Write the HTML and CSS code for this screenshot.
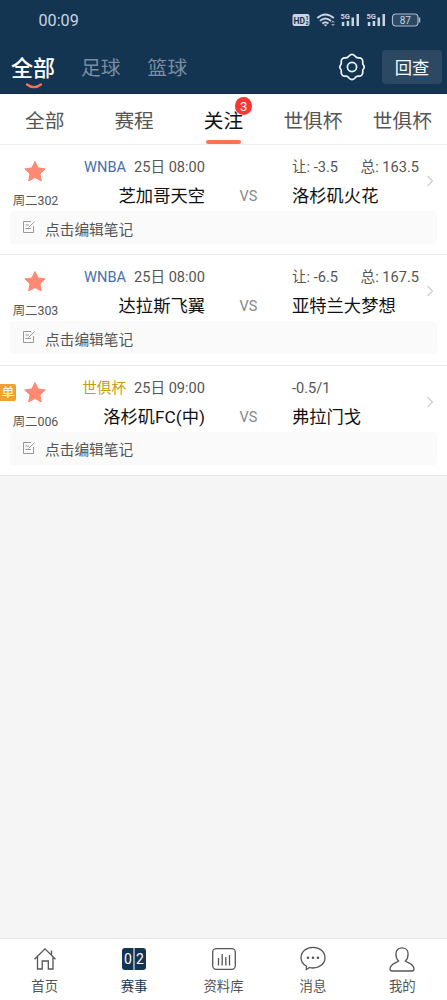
FILE: index.html
```html
<!DOCTYPE html>
<html lang="zh-CN">
<head>
<meta charset="utf-8">
<meta name="viewport" content="width=device-width, initial-scale=1">
<title>赛事</title>
<link rel="stylesheet" href="styles.css">
</head>
<body>
<div class="app">
  <header class="header">
    <div class="status">
      <span class="clock">00:09</span>
      <svg class="status-icons" width="130" height="16" viewBox="0 0 130 16">
        <rect x="0.500" y="2" width="17" height="12" rx="2" fill="#c9d4e0"/>
        <text x="1.500" y="11.500" class="hd">HD</text>
        <text x="13.400" y="7.600" class="hd-sub">1</text>
        <text x="13.400" y="13" class="hd-sub">2</text>
        <g fill="none" stroke="#c9d4e0" stroke-width="1.900">
          <path d="M25.300 6Q33.400 -1.200 41.800 6"/>
          <path d="M27.900 8.900Q33.400 4.200 39 8.900"/>
          <path d="M30.300 11.600Q33.400 9 36.500 11.600"/>
        </g>
        <path d="M31.500 12.400h4l-2 2z" fill="#c9d4e0"/>
        <path d="M39 10.500l2-2 2 2zM39 12l2 2 2-2z" fill="#8fa1b5"/>
        <g id="signal">
          <text x="48.500" y="7.300" class="net">5G</text>
          <path d="M49.800 10h2.500v4h-2.500zM54.700 9h2.500v5h-2.500zM59.500 5.500H62V14h-2.500zM64.500 2H67v12h-2.500z" fill="#c9d4e0"/>
        </g>
        <use href="#signal" x="26"/>
        <rect x="100.500" y="2" width="25.500" height="12" rx="3.500" fill="#2c4863" stroke="#a9b7c6" stroke-width="1.200"/>
        <path d="M127.500 5.500v5" stroke="#a9b7c6" stroke-width="1.500"/>
        <text x="113.300" y="11.500" class="power">87</text>
      </svg>
    </div>
    <div class="topbar">
      <nav class="sports">
        <span class="sport current">全部<svg class="smile" width="18" height="7" viewBox="0 0 18 7"><path d="M2 1.500Q9 6.800 16 1.500" fill="none" stroke="#fb6f55" stroke-width="2.300" stroke-linecap="round"/></svg></span>
        <span class="sport">足球</span>
        <span class="sport">篮球</span>
      </nav>
      <svg class="gear" width="28" height="28" viewBox="0 0 28 28" fill="none" stroke="#f3f6f8" stroke-width="1.700" stroke-linejoin="round">
        <path d="M11 3Q14 -.2 17 3Q18.300 4.900 20.500 4.800Q24.800 4.600 24.800 9Q24.400 11 25.400 12Q27 14 25.400 16Q24.400 17 24.800 19Q24.800 23.400 20.500 23.200Q18.300 23.100 17 25Q14 28.200 11 25Q9.700 23.100 7.500 23.200Q3.200 23.400 3.200 19Q3.600 17 2.600 16Q1 14 2.600 12Q3.600 11 3.200 9Q3.200 4.600 7.500 4.800Q9.700 4.900 11 3Z"/>
        <circle cx="14" cy="14" r="4.600"/>
      </svg>
      <button class="review">回查</button>
    </div>
  </header>

  <nav class="tabs">
    <span class="tab">全部</span>
    <span class="tab">赛程</span>
    <span class="tab active">关注<b class="badge">3</b></span>
    <span class="tab">世俱杯</span>
    <span class="tab">世俱杯</span>
  </nav>

  <main class="matches">
    <article class="match">
      <div class="info">
        <div class="follow">
          <svg class="star" width="24" height="23" viewBox="0 0 24 23"><path d="M12 1.500L15.100 7.900L22.200 8.900L17 13.800L18.300 20.900L12 17.500L5.700 20.900L7 13.800L1.800 8.900L8.900 7.900Z"/></svg>
          <span class="number">周二302</span>
        </div>
        <div class="home">
          <div class="meta"><span class="league">WNBA</span><span>25日 08:00</span></div>
          <div class="team">芝加哥天空</div>
        </div>
        <span class="vs">VS</span>
        <div class="away">
          <div class="meta"><span class="handicap">让: -3.5</span><span>总: 163.5</span></div>
          <div class="team">洛杉矶火花</div>
        </div>
        <svg class="arrow" width="8" height="12" viewBox="0 0 8 12"><path d="M1.500 1L6.500 6L1.500 11"/></svg>
      </div>
      <div class="note"><svg class="pen" width="14" height="14" viewBox="0 0 14 14"><path d="M9 1.500H1.500V12.500H11.500V6M3.500 5H7M3.500 8.500H9M6.500 7.500L12.700 1.500"/></svg>点击编辑笔记</div>
    </article>

    <article class="match">
      <div class="info">
        <div class="follow">
          <svg class="star" width="24" height="23" viewBox="0 0 24 23"><path d="M12 1.500L15.100 7.900L22.200 8.900L17 13.800L18.300 20.900L12 17.500L5.700 20.900L7 13.800L1.800 8.900L8.900 7.900Z"/></svg>
          <span class="number">周二303</span>
        </div>
        <div class="home">
          <div class="meta"><span class="league">WNBA</span><span>25日 08:00</span></div>
          <div class="team">达拉斯飞翼</div>
        </div>
        <span class="vs">VS</span>
        <div class="away">
          <div class="meta"><span class="handicap">让: -6.5</span><span>总: 167.5</span></div>
          <div class="team">亚特兰大梦想</div>
        </div>
        <svg class="arrow" width="8" height="12" viewBox="0 0 8 12"><path d="M1.500 1L6.500 6L1.500 11"/></svg>
      </div>
      <div class="note"><svg class="pen" width="14" height="14" viewBox="0 0 14 14"><path d="M9 1.500H1.500V12.500H11.500V6M3.500 5H7M3.500 8.500H9M6.500 7.500L12.700 1.500"/></svg>点击编辑笔记</div>
    </article>

    <article class="match">
      <span class="single">单</span>
      <div class="info">
        <div class="follow">
          <svg class="star" width="24" height="23" viewBox="0 0 24 23"><path d="M12 1.500L15.100 7.900L22.200 8.900L17 13.800L18.300 20.900L12 17.500L5.700 20.900L7 13.800L1.800 8.900L8.900 7.900Z"/></svg>
          <span class="number">周二006</span>
        </div>
        <div class="home">
          <div class="meta"><span class="league cup">世俱杯</span><span>25日 09:00</span></div>
          <div class="team">洛杉矶FC(中)</div>
        </div>
        <span class="vs">VS</span>
        <div class="away">
          <div class="meta"><span class="handicap">-0.5/1</span></div>
          <div class="team">弗拉门戈</div>
        </div>
        <svg class="arrow" width="8" height="12" viewBox="0 0 8 12"><path d="M1.500 1L6.500 6L1.500 11"/></svg>
      </div>
      <div class="note"><svg class="pen" width="14" height="14" viewBox="0 0 14 14"><path d="M9 1.500H1.500V12.500H11.500V6M3.500 5H7M3.500 8.500H9M6.500 7.500L12.700 1.500"/></svg>点击编辑笔记</div>
    </article>
  </main>

  <footer class="bottom">
    <a class="item"><svg width="28" height="28" viewBox="0 0 28 28"><path d="M3.500 14.200L14 3.800L24.500 14.200M6.500 12V24H11.200V16H17.300V24H22V12M20.500 9.500V5.500"/></svg>首页</a>
    <a class="item on"><svg width="28" height="28" viewBox="0 0 28 28"><rect class="score" x="2" y="3" width="24" height="22" rx="3"/><path class="split" d="M14 3V25"/><text x="8" y="18.800">0</text><text x="20" y="18.800">2</text></svg>赛事</a>
    <a class="item"><svg width="28" height="28" viewBox="0 0 28 28"><rect x="2.700" y="3.700" width="22.600" height="20.600" rx="3.500"/><path d="M8.500 13V20.500M12.200 9V20.500M15.800 12V20.500M19.500 10V20.500"/></svg>资料库</a>
    <a class="item"><svg width="28" height="28" viewBox="0 0 28 28"><path d="M7.500 21.200C4 19.300 2 16.300 2 12.800C2 6.900 7.300 2.300 14 2.300S26 6.900 26 12.800S20.700 23 14 23Q12.200 23 10.500 22.500L7.300 24.500Z"/><path class="dots" d="M9 12.800h.01M14 12.800h.01M19 12.800h.01"/></svg>消息</a>
    <a class="item"><svg width="28" height="28" viewBox="0 0 28 28"><path d="M10.600 16C8.800 14.300 7.900 11.700 7.900 9C7.900 5.300 10.400 2.900 14 2.900S20.100 5.300 20.100 9C20.100 11.700 19.200 14.300 17.400 16C20.500 18.200 26 19 26 24Q26 26 24 26H4Q2 26 2 24C2 19 7.500 18.200 10.600 16Z"/></svg>我的</a>
  </footer>
</div>
</body>
</html>
```

FILE: styles.css
```css
* { box-sizing: border-box; }
body {
  margin: 0;
  font-family: Roboto, "Noto Sans CJK SC", sans-serif;
  color: #555;
  background: #f5f5f5;
}
svg { display: block; flex: none; }
.app { display: flex; flex-direction: column; height: 1000px; }

.header { height: 94px; background: #143552; border-bottom: 1px solid #0d2c4b; }
.status { display: flex; justify-content: space-between; align-items: center; height: 40px; padding: 0 25px 0 38.500px; }
.clock { padding-top: 1px; color: #c9d4e0; font-size: 16.200px; line-height: 20px; }
.hd { font: bold 8.500px Roboto, sans-serif; fill: #143552; }
.hd-sub { font: bold 5.500px Roboto, sans-serif; fill: #143552; }
.net { font: bold 7.500px Roboto, sans-serif; fill: #c9d4e0; }
.power { font: 10px Roboto, sans-serif; fill: #c9d4e0; text-anchor: middle; }

.topbar { display: flex; align-items: center; height: 54px; padding: 0 5px 0 11px; }
.sports { display: flex; flex: 1; gap: 27px; align-items: center; padding-top: 4px; }
.sport { position: relative; font-size: 19.800px; line-height: 30px; color: #7b8da0; }
.sport.current { margin-right: -1px; font-size: 22px; font-weight: 500; color: #fff; }
.smile { position: absolute; left: 14px; top: 29px; }
.gear { margin-right: 16px; }
.review {
  width: 60px; height: 34px; padding: 2px 0 0;
  border: 0; border-radius: 4px;
  background: #2c4863; color: #f5f8fa;
  font: 17.300px/32px Roboto, "Noto Sans CJK SC", sans-serif;
}

.tabs { display: flex; height: 51px; background: #fff; border-bottom: 1px solid #ececec; }
.tab { position: relative; flex: 1 0 20%; text-align: center; font-size: 19.700px; line-height: 55px; }
.tab.active { color: #111; }
.tab.active::after {
  content: ""; position: absolute; left: 50%; bottom: 0;
  width: 35px; height: 4px; margin-left: -17.500px;
  border-radius: 2px; background: #fd7157;
}
.badge {
  position: absolute; left: 56px; top: 3px;
  width: 17.500px; height: 17.500px; border-radius: 50%;
  background: #fd3535; color: #fff;
  font-size: 13px; font-weight: 400; line-height: 19px;
}

.matches { flex: 1; }
.match { position: relative; height: 110.400px; padding: 0 10px; background: #fff; border-bottom: 1px solid #ebebeb; }
.info { display: grid; grid-template-columns: 50px 145px 87px 134px 9px; height: 66px; align-items: start; }
.follow { display: flex; flex-direction: column; align-items: center; padding-top: 15px; }
.star { fill: #ff8973; stroke: #ff8973; stroke-width: 1; stroke-linejoin: round; }
.number { margin-top: 8px; padding-left: 1px; font-size: 12.400px; line-height: 19px; white-space: nowrap; }
.home { text-align: right; }
.home .meta { justify-content: flex-end; gap: 8px; }
.meta { display: flex; padding-top: 11px; font-size: 14.600px; line-height: 22px; white-space: nowrap; }
.away .meta { justify-content: space-between; width: 127px; }
.league { color: #4770ac; }
.league.cup { color: #c99b15; }
.team { margin-top: 4px; font-size: 17.300px; line-height: 28px; color: #111; white-space: nowrap; }
.vs { padding-top: 42px; text-align: center; font-size: 14.500px; line-height: 20px; color: #888; }
.arrow { margin-top: 30px; fill: none; stroke: #ccc; stroke-width: 1.100; }
.note {
  display: flex; align-items: center; height: 33px; padding: 1px 0 0 12px; gap: 9px;
  border-radius: 4px; background: #fafafa; font-size: 14.700px;
}
.pen { margin-top: -2px; fill: none; stroke: #999; stroke-width: 1; }
.single {
  position: absolute; left: 0; top: 18px;
  width: 16px; height: 17px; border-radius: 0 2px 2px 0;
  background: #f0a22c; color: #fff; font-size: 12.500px; line-height: 18px; text-align: center;
}

.bottom { display: flex; height: 62px; background: #fff; border-top: 1px solid #e8e8e8; }
.item { display: flex; flex: 1; flex-direction: column; align-items: center; padding-top: 6px; gap: 4px; font-size: 13.400px; line-height: 20px; }
.item svg { fill: none; stroke: #555; stroke-width: 1.300; }
.item.on { color: #143552; }
.item .score { fill: #143552; stroke: none; }
.item .split { stroke: #dfe5eb; stroke-width: 1.200; }
.item text { fill: #fff; stroke: none; font: 14px Roboto, sans-serif; text-anchor: middle; }
.item .dots { stroke-width: 2.600; stroke-linecap: round; }
```
